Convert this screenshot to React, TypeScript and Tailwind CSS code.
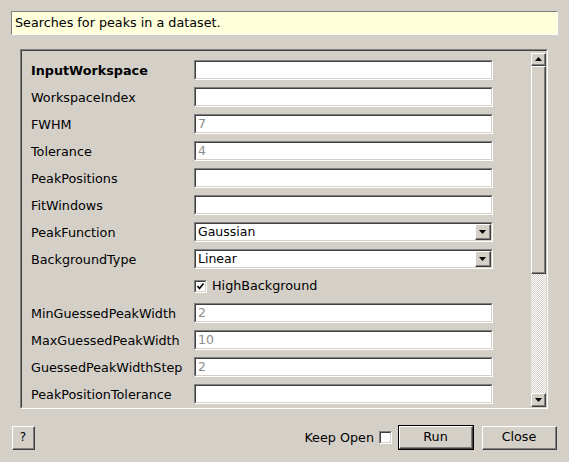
import React from "react";

const font = { fontFamily: '"DejaVu Sans", Verdana, sans-serif' };

function Sunken({ children, className = "" }: { children?: React.ReactNode; className?: string }) {
  return (
    <div className={"border-t border-l border-t-[#808080] border-l-[#808080] border-b border-r border-b-white border-r-white " + className}>
      <div className="h-full w-full border-t border-l border-t-[#404040] border-l-[#404040] border-b border-r border-b-[#d4d0c8] border-r-[#d4d0c8] bg-white flex items-center">
        {children}
      </div>
    </div>
  );
}

function Field({ value }: { value?: string }) {
  return (
    <Sunken className="w-[299px] h-[20px]">
      <span className="pl-[2px] text-[12.5px] text-[#8c8c8c] leading-none">{value ?? ""}</span>
    </Sunken>
  );
}

function Raised({ children, className = "", def = false }: { children?: React.ReactNode; className?: string; def?: boolean }) {
  const inner = (
    <div className="h-full w-full border-t border-l border-t-white border-l-white border-b border-r border-b-[#404040] border-r-[#404040]">
      <div className="h-full w-full border-b border-r border-b-[#808080] border-r-[#808080] flex items-center justify-center">
        {children}
      </div>
    </div>
  );
  if (def) return <div className={"border border-black " + className}>{inner}</div>;
  return <div className={className}>{inner}</div>;
}

function Arrow({ down }: { down?: boolean }) {
  return (
    <svg width="7" height="4" viewBox="0 0 7 4">
      {down ? <polygon points="0,0 7,0 3.5,4" fill="#000" /> : <polygon points="0,4 7,4 3.5,0" fill="#000" />}
    </svg>
  );
}

function Combo({ value }: { value: string }) {
  return (
    <Sunken className="w-[299px] h-[20px]">
      <span className="pl-[2px] text-[12.5px] text-black leading-none flex-1">{value}</span>
      <Raised className="w-[16px] h-[16px] bg-[#d4d0c8]">
        <Arrow down />
      </Raised>
    </Sunken>
  );
}

type Row = { label: string; kind: "field" | "combo" | "check"; value?: string; bold?: boolean };

const rows: Row[] = [
  { label: "InputWorkspace", kind: "field", bold: true },
  { label: "WorkspaceIndex", kind: "field" },
  { label: "FWHM", kind: "field", value: "7" },
  { label: "Tolerance", kind: "field", value: "4" },
  { label: "PeakPositions", kind: "field" },
  { label: "FitWindows", kind: "field" },
  { label: "PeakFunction", kind: "combo", value: "Gaussian" },
  { label: "BackgroundType", kind: "combo", value: "Linear" },
  { label: "", kind: "check", value: "HighBackground" },
  { label: "MinGuessedPeakWidth", kind: "field", value: "2" },
  { label: "MaxGuessedPeakWidth", kind: "field", value: "10" },
  { label: "GuessedPeakWidthStep", kind: "field", value: "2" },
  { label: "PeakPositionTolerance", kind: "field" },
];

function CheckBox({ checked }: { checked?: boolean }) {
  return (
    <div className="w-[13px] h-[13px] border-t border-l border-t-[#808080] border-l-[#808080] border-b border-r border-b-white border-r-white">
      <div className="w-full h-full border-t border-l border-t-[#404040] border-l-[#404040] border-b border-r border-b-[#d4d0c8] border-r-[#d4d0c8] bg-white flex items-center justify-center">
        {checked && (
          <svg width="7" height="7" viewBox="0 0 7 7">
            <polyline points="0.5,3 2.5,5.5 6.5,0.5" fill="none" stroke="#000" strokeWidth="1.6" />
          </svg>
        )}
      </div>
    </div>
  );
}

export default function App() {
  return (
    <div className="w-[569px] h-[462px] bg-[#d4d0c8] overflow-hidden text-black" style={font}>
      <div className="pt-[11px] px-[11px]">
        <div className="h-[24px] bg-[#ffffdc] border-t border-l border-t-[#808080] border-l-[#808080] border-b border-r border-b-white border-r-white flex items-center pl-[3px] text-[12.75px]">
          Searches for peaks in a dataset.
        </div>
      </div>

      <div className="ml-[20px] mt-[14px] w-[528px] h-[360px] border-t border-l border-t-[#808080] border-l-[#808080] border-b border-r border-b-white border-r-white">
        <div className="h-full w-full border-t border-l border-t-[#404040] border-l-[#404040] border-b border-r border-b-[#d4d0c8] border-r-[#d4d0c8] flex">
          <div className="flex-1 pt-[9px] pl-[9px] flex flex-col gap-[7px]">
            {rows.map((r, i) => (
              <div key={i} className="flex items-center h-[20px]">
                <div className={"w-[163px] text-[12.75px] pt-[1px] " + (r.bold ? "font-bold" : "")}>{r.label}</div>
                {r.kind === "field" && <Field value={r.value} />}
                {r.kind === "combo" && <Combo value={r.value!} />}
                {r.kind === "check" && (
                  <div className="flex items-center gap-[5px]">
                    <CheckBox checked />
                    <span className="text-[12.75px]">{r.value}</span>
                  </div>
                )}
              </div>
            ))}
          </div>
          <div className="w-[15px] pt-[2px] flex flex-col">
            <Raised className="h-[13px] bg-[#d4d0c8]">
              <Arrow />
            </Raised>
            <Raised className="h-[208px] bg-[#d4d0c8]" />
            <div className="flex-1 bg-[repeating-conic-gradient(#ffffff_0%_25%,#d4d0c8_0%_50%)] bg-[length:2px_2px]" />
            <Raised className="h-[14px] bg-[#d4d0c8]">
              <Arrow down />
            </Raised>
          </div>
        </div>
      </div>

      <div className="mt-[16px] flex items-center pl-[12px] pr-[12px]">
        <Raised className="w-[23px] h-[24px] bg-[#d4d0c8]">
          <span className="text-[12px]">?</span>
        </Raised>
        <div className="flex-1" />
        <span className="text-[12.75px] mr-[5px]">Keep Open</span>
        <CheckBox />
        <Raised def className="ml-[6px] w-[76px] h-[25px] bg-[#d4d0c8]">
          <span className="text-[12.75px]">Run</span>
        </Raised>
        <Raised className="ml-[8px] w-[75px] h-[24px] bg-[#d4d0c8]">
          <span className="text-[12.75px]">Close</span>
        </Raised>
      </div>
    </div>
  );
}
